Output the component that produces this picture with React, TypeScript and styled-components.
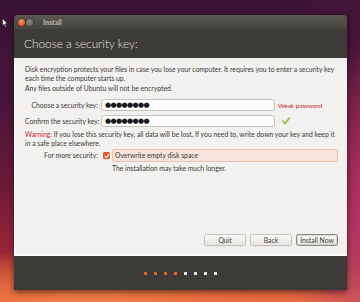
import styled, { createGlobalStyle } from "styled-components";

const GlobalStyle = createGlobalStyle`
  html, body { margin: 0; padding: 0; }
  body {
    width: 360px;
    height: 302px;
    overflow: hidden;
    font-family: Lato, "Open Sans", sans-serif;
  }
`;

const Desktop = styled.div`
  position: relative;
  width: 360px;
  height: 302px;
  box-sizing: border-box;
  padding: 15px 13px 12px 14px;
  display: flex;
  background:
    radial-gradient(ellipse 260px 70px at 25% 105%, #f38a4c 0%, #ea7040 45%, rgba(230, 100, 60, 0) 100%),
    radial-gradient(ellipse 90px 180px at 104% 72%, #b0346c 0%, rgba(160, 45, 95, 0) 100%),
    linear-gradient(172deg, #381333 0%, #461539 28%, #6c1a38 52%, #9c2536 72%, #d5513c 90%, #ec7544 100%);
`;

const Cursor = styled.svg`
  position: absolute;
  left: 2px;
  top: 18px;
`;

const Window = styled.div`
  flex: 1;
  display: flex;
  flex-direction: column;
  border-radius: 4px 4px 0 0;
  overflow: hidden;
  box-shadow: 0 2px 6px rgba(0, 0, 0, 0.55);
`;

const TitleBar = styled.div`
  height: 14px;
  display: flex;
  align-items: center;
  padding-left: 4px;
  background: linear-gradient(#5a5853, #45443f);
`;

const WinButton = styled.span<{ $close?: boolean }>`
  width: 7px;
  height: 7px;
  border-radius: 50%;
  margin-right: 1px;
  background: ${(p) =>
    p.$close
      ? "radial-gradient(circle at 50% 35%, #f59470, #e2541d 70%)"
      : "radial-gradient(circle at 50% 35%, #8e8c87, #6a6863 70%)"};
  box-shadow: 0 0 0 0.5px rgba(0, 0, 0, 0.5);
`;

const TitleText = styled.span`
  margin-left: 9px;
  font-size: 7px;
  font-weight: 700;
  color: #bdb9b0;
`;

const Header = styled.div`
  height: 29px;
  display: flex;
  align-items: center;
  padding: 0 0 1px 10px;
  box-sizing: border-box;
  background: #3c3b37;
  color: #e5e2dc;
  font-size: 11.8px;
  font-weight: 300;
`;

const Content = styled.div`
  flex: 1;
  display: flex;
  flex-direction: column;
  padding: 7px 9px 8px 10px;
  background: #f2f1f0;
  border-left: 1px solid #ffffff;
  border-bottom: 2px solid #ffffff;
  color: #3c3b37;
  font-size: 6.8px;
  line-height: 9px;
`;

const Para = styled.p`
  margin: 0 0 1px;
`;

const Form = styled.div`
  display: grid;
  grid-template-columns: 73px 174px auto;
  column-gap: 3px;
  row-gap: 4px;
  align-items: center;
  margin-top: 5px;
`;

const Label = styled.span`
  text-align: right;
  white-space: nowrap;
`;

const KeyInput = styled.div`
  height: 12px;
  box-sizing: border-box;
  display: flex;
  align-items: center;
  padding-left: 3px;
  background: #ffffff;
  border: 1px solid #c3c0ba;
  border-radius: 3px;
  color: #1a1a1a;
  font-family: "DejaVu Sans", sans-serif;
  font-size: 7px;
  letter-spacing: -0.6px;
`;

const Weak = styled.span`
  color: #c7282c;
  font-size: 6.4px;
`;

const Warning = styled.p`
  margin: 3px 0 0;
  white-space: nowrap;
`;

const Red = styled.span`
  color: #c7282c;
`;

const SecurityRow = styled.div`
  display: flex;
  align-items: center;
  margin-top: 1px;
`;

const SecurityLabel = styled(Label)`
  width: 73px;
  flex: none;
`;

const CheckBox = styled.span`
  width: 7px;
  height: 7px;
  margin-left: 5px;
  border-radius: 1.5px;
  background: #e05a27;
  display: flex;
  align-items: center;
  justify-content: center;
`;

const Highlight = styled.div`
  flex: 1;
  height: 11px;
  margin-left: 2px;
  padding-left: 2px;
  display: flex;
  align-items: center;
  background: #f6e4dc;
  border: 1px solid #f0c2ae;
  border-radius: 2px;
`;

const Note = styled.p`
  margin: 1.5px 0 0 87px;
`;

const ButtonRow = styled.div`
  margin-top: auto;
  display: flex;
  justify-content: flex-end;
  gap: 4px;
`;

const Button = styled.button<{ $default?: boolean }>`
  width: 42px;
  height: 12px;
  padding: 0;
  font-family: inherit;
  font-size: 6.8px;
  color: #3c3b37;
  background: linear-gradient(#fbfbfa, #e6e4e1);
  border: 1px solid ${(p) => (p.$default ? "#8c8983" : "#c4c0ba")};
  border-radius: 2.5px;
  box-shadow: ${(p) => (p.$default ? "inset 0 0 0 0.5px #b8b5ae" : "0 0.5px 0 rgba(0,0,0,0.08)")};
`;

const Footer = styled.div`
  height: 34px;
  display: flex;
  align-items: center;
  justify-content: center;
  gap: 7px;
  background: #3c3b37;
`;

const Dot = styled.span<{ $done?: boolean }>`
  width: 3px;
  height: 3px;
  border-radius: 0.5px;
  background: ${(p) => (p.$done ? "#e9642d" : "#e8e6e2")};
`;

const steps = [true, true, true, true, false, false, false, false];

export default function App() {
  return (
    <>
      <GlobalStyle />
      <Desktop>
        <Window>
          <TitleBar>
            <WinButton $close />
            <WinButton />
            <TitleText>Install</TitleText>
          </TitleBar>
          <Header>Choose a security key:</Header>
          <Content>
            <Para>
              Disk encryption protects your files in case you lose your computer. It requires you to enter a security key
              each time the computer starts up.
            </Para>
            <Para>Any files outside of Ubuntu will not be encrypted.</Para>
            <Form>
              <Label>Choose a security key:</Label>
              <KeyInput>●●●●●●●●</KeyInput>
              <Weak>Weak password</Weak>
              <Label>Confirm the security key:</Label>
              <KeyInput>●●●●●●●●</KeyInput>
              <svg width="8" height="8" viewBox="0 0 8 8" style={{ marginLeft: 4 }}>
                <path d="M1 4.2 L3.1 6.6 L7.2 1.2" fill="none" stroke="#8dbb32" strokeWidth="1.6" strokeLinecap="round" strokeLinejoin="round" />
              </svg>
            </Form>
            <Warning>
              <Red>Warning:</Red> If you lose this security key, all data will be lost. If you need to, write down your key and keep it
              <br />
              in a safe place elsewhere.
            </Warning>
            <SecurityRow>
              <SecurityLabel>For more security:</SecurityLabel>
              <CheckBox>
                <svg width="6" height="6" viewBox="0 0 6 6">
                  <path d="M1 3.1 L2.5 4.6 L5 1.4" fill="none" stroke="#fff" strokeWidth="1.1" strokeLinecap="round" strokeLinejoin="round" />
                </svg>
              </CheckBox>
              <Highlight>Overwrite empty disk space</Highlight>
            </SecurityRow>
            <Note>The installation may take much longer.</Note>
            <ButtonRow>
              <Button>Quit</Button>
              <Button>Back</Button>
              <Button $default>Install Now</Button>
            </ButtonRow>
          </Content>
          <Footer>
            {steps.map((done, i) => (
              <Dot key={i} $done={done} />
            ))}
          </Footer>
        </Window>
        <Cursor width="6" height="10" viewBox="0 0 6 10">
          <path d="M0.5 0.5 L0.5 7.5 L2 6.2 L3.2 9 L4.3 8.5 L3.2 5.8 L5.2 5.6 Z" fill="#fff" stroke="#222" strokeWidth="0.6" />
        </Cursor>
      </Desktop>
    </>
  );
}
